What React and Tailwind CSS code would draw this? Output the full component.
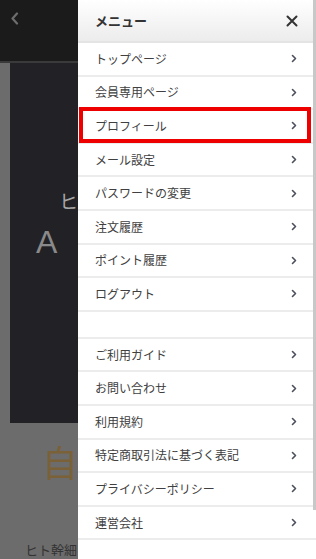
import React from 'react';

const groupA = ['トップページ', '会員専用ページ', 'プロフィール', 'メール設定', 'パスワードの変更', '注文履歴', 'ポイント履歴', 'ログアウト'];
const groupB = ['ご利用ガイド', 'お問い合わせ', '利用規約', '特定商取引法に基づく表記', 'プライバシーポリシー', '運営会社'];

const font = { fontFamily: '"Noto Sans CJK JP", "Noto Sans", sans-serif' };

const Chevron = () => (
  <svg width="6" height="9" viewBox="0 0 6 9" fill="none">
    <path d="M1.5 1.5L4.5 4.5L1.5 7.5" stroke="#4b505c" strokeWidth="1.6" strokeLinecap="round" strokeLinejoin="round" />
  </svg>
);

const MenuRow = ({ label, highlight }) => (
  <div className="relative flex items-center justify-between h-[33.6px] border-b-2 border-[#ececec] pl-[17px] pr-[19px]">
    <span className="text-[12px] text-[#404040] leading-none">{label}</span>
    <Chevron />
    {highlight && (
      <span className="absolute -top-[3px] left-[1px] right-[5px] -bottom-[1px] border-[4px] border-[#ee0000]" />
    )}
  </div>
);

const App = () => {
  return (
    <div className="w-[316px] h-[559px] flex overflow-hidden bg-white" style={font}>
      {/* page behind the drawer */}
      <div className="w-[78px] flex-none flex flex-col overflow-hidden">
        <div className="h-[63px] flex-none bg-[#1b1b1b] border-b-2 border-[#3a3a3a] pl-[10px] pt-[12px]">
          <svg width="9" height="13" viewBox="0 0 9 13" fill="none">
            <path d="M7 1.5L2.5 6.5L7 11.5" stroke="#6d6d6d" strokeWidth="2.2" strokeLinecap="round" strokeLinejoin="round" />
          </svg>
        </div>
        <div className="flex-1 bg-[#6c6c6c] pl-[10px] flex flex-col">
          <div className="h-[360px] flex-none bg-[#222226] flex flex-col pt-[128px]">
            <span className="ml-[49px] text-[19px] leading-none text-[#a7a7a7]">ヒ</span>
            <span className="ml-[26px] mt-[16px] text-[32px] leading-none font-light text-[#8a8a8a]" style={{ fontFamily: '"Liberation Sans", sans-serif' }}>A</span>
          </div>
          <span className="ml-[32px] mt-[20px] text-[36px] leading-none text-[#7a6138]">自</span>
          <span className="ml-[15px] mt-[64px] text-[13px] leading-none text-[#333] whitespace-nowrap overflow-hidden">ヒト幹細</span>
        </div>
      </div>

      {/* drawer menu */}
      <div className="relative flex-1 bg-white flex flex-col">
        <div className="h-[43px] flex-none flex items-center justify-between pl-[17px] pr-[18px] bg-gradient-to-b from-white to-[#ececec] border-b-2 border-[#e4e4e4]">
          <span className="text-[13px] font-bold text-[#333]">メニュー</span>
          <svg width="12" height="12" viewBox="0 0 12 12" fill="none">
            <path d="M1.5 1.5L10.5 10.5M10.5 1.5L1.5 10.5" stroke="#333" strokeWidth="2" strokeLinecap="round" />
          </svg>
        </div>
        {groupA.map((label) => (
          <MenuRow key={label} label={label} highlight={label === 'プロフィール'} />
        ))}
        <div className="h-[27px] flex-none border-b-2 border-[#ececec]" />
        {groupB.map((label) => (
          <MenuRow key={label} label={label} />
        ))}
        <span className="absolute right-0 top-0 w-[3px] h-[510px] bg-[#c8c8c8]" />
      </div>
    </div>
  );
};

export default App;
